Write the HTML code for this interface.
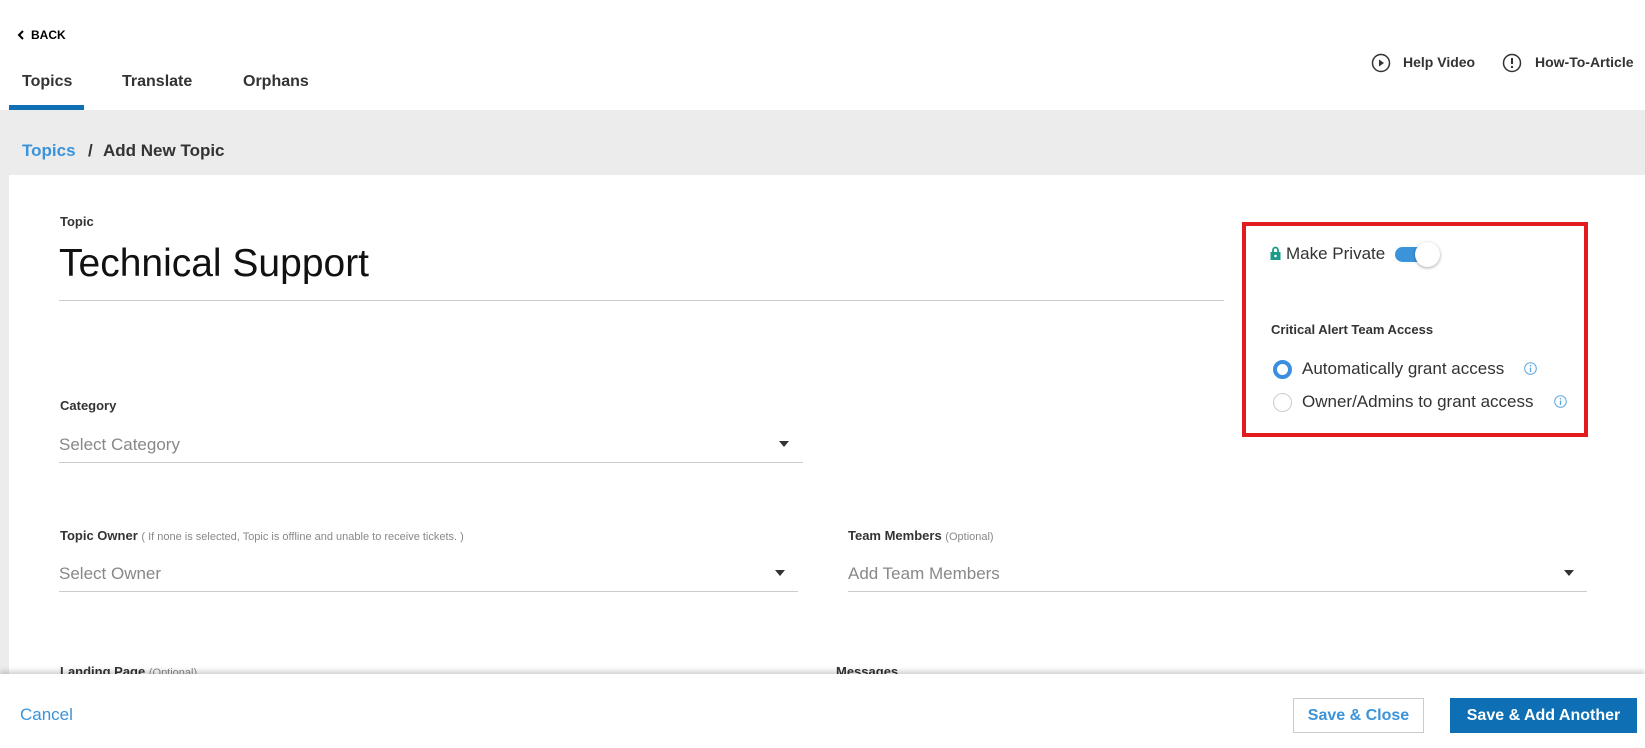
<!DOCTYPE html>
<html><head><meta charset="utf-8"><style>
*{margin:0;padding:0;box-sizing:border-box}
body{width:1645px;height:748px;overflow:hidden;background:#fff;font-family:"Liberation Sans",sans-serif;color:#333;position:relative}
.a{position:absolute;white-space:nowrap}
.lbl{font-size:13px;font-weight:bold;color:#333}
.ph{font-size:17px;color:#888}
.line{position:absolute;height:1px;background:#ccc}
.tri{position:absolute;width:0;height:0;border-left:5px solid transparent;border-right:5px solid transparent;border-top:6px solid #333}
</style></head><body>
<div class="a" style="left:17px;top:28px;font-size:12px;font-weight:bold;color:#000">
<svg width="8" height="10" style="vertical-align:-1px;margin-right:6px"><path d="M6 1L2 5L6 9" stroke="#000" stroke-width="2" fill="none"/></svg>BACK</div>
<div class="a" style="left:22px;top:73px;font-size:16px;font-weight:bold;color:#333">Topics</div>
<div class="a" style="left:122px;top:73px;font-size:16px;font-weight:bold;color:#333">Translate</div>
<div class="a" style="left:243px;top:73px;font-size:16px;font-weight:bold;color:#333">Orphans</div>
<div class="a" style="left:9px;top:105px;width:75px;height:5px;background:#0e6fb5"></div>
<svg class="a" style="left:1371px;top:53px" width="20" height="20"><circle cx="10" cy="10" r="8.5" stroke="#333" stroke-width="1.5" fill="none"/><path d="M8 6.5L13 10L8 13.5Z" fill="#333"/></svg>
<div class="a" style="left:1403px;top:54px;font-size:14px;font-weight:bold;color:#333">Help Video</div>
<svg class="a" style="left:1502px;top:53px" width="20" height="20"><circle cx="10" cy="10" r="8.5" stroke="#333" stroke-width="1.5" fill="none"/><path d="M10 5V11" stroke="#333" stroke-width="2"/><circle cx="10" cy="14" r="1.2" fill="#333"/></svg>
<div class="a" style="left:1535px;top:54px;font-size:14px;font-weight:bold;color:#333">How-To-Article</div>
<div class="a" style="left:0;top:110px;width:1645px;height:65px;background:#ececec"></div>
<div class="a" style="left:22px;top:141px;font-size:17px;font-weight:bold;color:#3b94d9">Topics</div>
<div class="a" style="left:88px;top:141px;font-size:17px;font-weight:bold;color:#333">/</div>
<div class="a" style="left:103px;top:141px;font-size:17px;font-weight:bold;color:#333">Add New Topic</div>
<div class="a" style="left:0;top:175px;width:9px;height:500px;background:#ececec"></div>
<div class="a lbl" style="left:60px;top:214px">Topic</div>
<div class="a" style="left:59px;top:242px;font-size:39px;color:#111">Technical Support</div>
<div class="line" style="left:59px;top:300px;width:1165px"></div>
<div class="a" style="left:1242px;top:222px;width:346px;height:215px;border:4px solid #e21c1c"></div>
<svg class="a" style="left:1270px;top:246px" width="11" height="14"><path d="M3 6V4a2.5 2.5 0 0 1 5 0V6" stroke="#1a9a88" stroke-width="1.8" fill="none"/><rect x="0.5" y="6" width="10" height="8" fill="#1a9a88"/><circle cx="5.5" cy="10" r="1.3" fill="#fff"/></svg>
<div class="a" style="left:1286px;top:244px;font-size:17px;color:#333">Make Private</div>
<div class="a" style="left:1395px;top:247px;width:40px;height:15px;border-radius:8px;background:#3b94d9"></div>
<div class="a" style="left:1415px;top:242px;width:25px;height:25px;border-radius:50%;background:#fff;box-shadow:0 1px 3px rgba(0,0,0,.35)"></div>
<div class="a lbl" style="left:1271px;top:322px">Critical Alert Team Access</div>
<div class="a" style="left:1273px;top:360px;width:19px;height:19px;border-radius:50%;border:4px solid #3b8ee0;background:#fff"></div>
<div class="a" style="left:1302px;top:359px;font-size:17px;color:#333">Automatically grant access</div>
<div class="a" style="left:1273px;top:393px;width:19px;height:19px;border-radius:50%;border:1px solid #ccc;background:#fff"></div>
<div class="a" style="left:1302px;top:392px;font-size:17px;color:#333">Owner/Admins to grant access</div>
<svg class="a" style="left:1524px;top:362px" width="13" height="13"><circle cx="6.5" cy="6.5" r="5.8" stroke="#5aa7e0" fill="none"/><path d="M6.5 5.5V10" stroke="#5aa7e0" stroke-width="1.3"/><circle cx="6.5" cy="3.7" r=".8" fill="#5aa7e0"/></svg>
<svg class="a" style="left:1554px;top:395px" width="13" height="13"><circle cx="6.5" cy="6.5" r="5.8" stroke="#5aa7e0" fill="none"/><path d="M6.5 5.5V10" stroke="#5aa7e0" stroke-width="1.3"/><circle cx="6.5" cy="3.7" r=".8" fill="#5aa7e0"/></svg>
<div class="a lbl" style="left:60px;top:398px">Category</div>
<div class="a ph" style="left:59px;top:435px">Select Category</div>
<div class="tri" style="left:779px;top:441px"></div>
<div class="line" style="left:59px;top:462px;width:744px"></div>
<div class="a lbl" style="left:60px;top:528px">Topic Owner <span style="font-weight:normal;font-size:11px;color:#888">( If none is selected, Topic is offline and unable to receive tickets. )</span></div>
<div class="a ph" style="left:59px;top:564px">Select Owner</div>
<div class="tri" style="left:775px;top:570px"></div>
<div class="line" style="left:59px;top:591px;width:739px"></div>
<div class="a lbl" style="left:848px;top:528px">Team Members <span style="font-weight:normal;font-size:11px;color:#888">(Optional)</span></div>
<div class="a ph" style="left:848px;top:564px">Add Team Members</div>
<div class="tri" style="left:1564px;top:570px"></div>
<div class="line" style="left:848px;top:591px;width:739px"></div>
<div class="a lbl" style="left:60px;top:664px">Landing Page <span style="font-weight:normal;font-size:11px;color:#888">(Optional)</span></div>
<div class="a lbl" style="left:836px;top:664px">Messages</div>
<div class="a" style="left:0;top:674px;width:1645px;height:74px;background:#fff;box-shadow:0 -3px 5px rgba(0,0,0,.18)"></div>
<div class="a" style="left:20px;top:705px;font-size:17px;color:#3b94d9">Cancel</div>
<div class="a" style="left:1293px;top:698px;width:131px;height:35px;border:1px solid #ccc;font-size:16px;font-weight:bold;color:#3b94d9;text-align:center;line-height:33px">Save &amp; Close</div>
<div class="a" style="left:1450px;top:698px;width:187px;height:35px;background:#0e6fb5;font-size:16px;font-weight:bold;color:#fff;text-align:center;line-height:35px">Save &amp; Add Another</div>
</body></html>
